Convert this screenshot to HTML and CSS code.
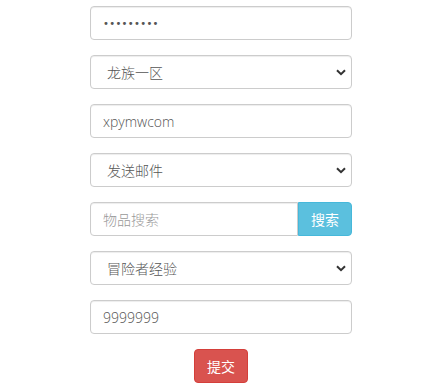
FILE: index.html
```html
<!DOCTYPE html>
<html>
<head>
<meta charset="utf-8">
<link rel="stylesheet" href="styles.css">
</head>
<body>
<form class="form">
  <input class="control pass" type="password" value="123456789">
  <div class="select-wrap">
    <select class="control select"><option>龙族一区</option></select>
    <svg class="chev" width="10" height="7" viewBox="0 0 10 7"><path d="M1 1.2 L5 5.2 L9 1.2" fill="none" stroke="#333" stroke-width="2"/></svg>
  </div>
  <input class="control" type="text" value="xpymwcom">
  <div class="select-wrap">
    <select class="control select"><option>发送邮件</option></select>
    <svg class="chev" width="10" height="7" viewBox="0 0 10 7"><path d="M1 1.2 L5 5.2 L9 1.2" fill="none" stroke="#333" stroke-width="2"/></svg>
  </div>
  <div class="group">
    <input class="control group-input" type="text" placeholder="物品搜索">
    <button class="btn btn-info" type="button">搜索</button>
  </div>
  <div class="select-wrap">
    <select class="control select"><option>冒险者经验</option></select>
    <svg class="chev" width="10" height="7" viewBox="0 0 10 7"><path d="M1 1.2 L5 5.2 L9 1.2" fill="none" stroke="#333" stroke-width="2"/></svg>
  </div>
  <input class="control" type="text" value="9999999">
  <div class="actions">
    <button class="btn btn-danger" type="button">提交</button>
  </div>
</form>
</body>
</html>
```
FILE: styles.css
```css
html, body {
  margin: 0;
  padding: 0;
  background: #fff;
}
body {
  font-family: "Open Sans", "Noto Sans CJK SC", sans-serif;
  font-size: 14px;
  color: #555;
}
.form {
  width: 262px;
  margin-left: 90px;
  padding-top: 6px;
  display: flex;
  flex-direction: column;
  gap: 15px;
}
.control {
  box-sizing: border-box;
  display: block;
  width: 100%;
  height: 34px;
  padding: 0 12px;
  font-family: "Open Sans", "Noto Sans CJK SC", sans-serif;
  font-weight: 300;
  font-size: 14px;
  color: #555;
  background: #fff;
  border: 1px solid #ccc;
  border-radius: 4px;
  box-shadow: inset 0 1px 1px rgba(0,0,0,.075);
  outline: none;
  margin: 0;
}
.control::placeholder {
  color: #999;
}
.pass {
  letter-spacing: 0.3px;
  font-family: "DejaVu Sans", sans-serif;
  font-weight: 400;
  font-size: 10px;
  color: #555;
}
.select-wrap {
  position: relative;
}
.select {
  -webkit-appearance: none;
  appearance: none;
  padding-left: 16px;
}
.chev {
  position: absolute;
  right: 6px;
  top: 14px;
  pointer-events: none;
}
.group {
  display: flex;
}
.group-input {
  flex: 1;
  border-radius: 4px 0 0 4px;
}
.btn {
  box-sizing: border-box;
  border: 1px solid transparent;
  border-radius: 4px;
  color: #fff;
  font-family: "Open Sans", "Noto Sans CJK SC", sans-serif;
  font-size: 14px;
  padding: 0 12px;
  margin: 0;
}
.btn-info {
  background: #5bc0de;
  border-color: #46b8da;
  border-radius: 0 4px 4px 0;
  width: 54px;
  height: 34px;
}
.btn-danger {
  background: #d9534f;
  border-color: #d43f3a;
  width: 54px;
  height: 34px;
}
.actions {
  display: flex;
  justify-content: center;
}
```
